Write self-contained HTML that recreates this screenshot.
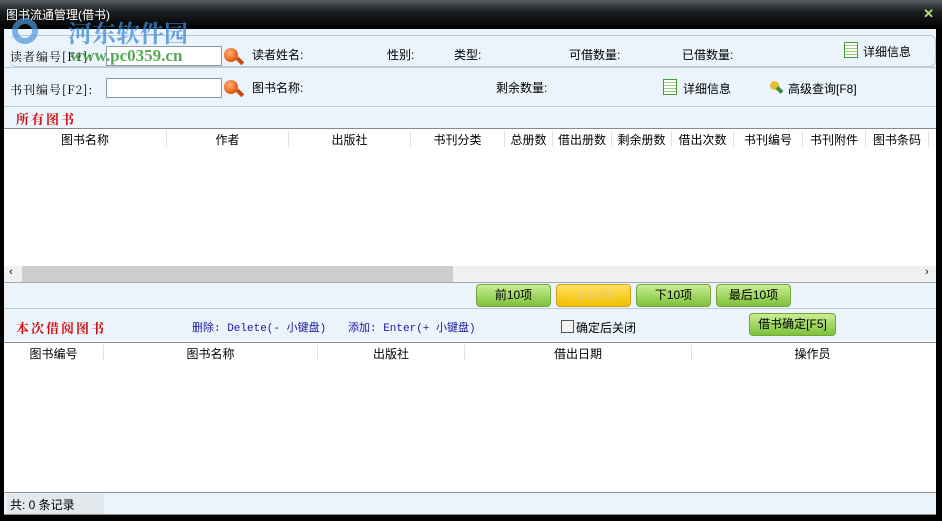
<!DOCTYPE html>
<html><head><meta charset="utf-8"><style>
*{margin:0;padding:0;box-sizing:border-box}
body{width:942px;height:521px;background:#000;position:relative;overflow:hidden;font-family:"Liberation Sans","Noto Sans CJK SC",sans-serif;font-size:12px;color:#000}
.a{position:absolute}
.title{left:0;top:0;width:942px;height:29px;background:linear-gradient(#5a5f62,#1c1f21 40%,#000);color:#fff;font-size:12px;padding:6px 0 0 6px}
.main{left:4px;top:29px;width:932px;height:486px;background:#eaf4fa}
.inp{background:#fff;border:1px solid #8a9aa6;height:20px}
.mag{width:14px;height:14px;border-radius:50%;background:radial-gradient(circle at 40% 35%,#ffb27a,#e8560e 70%)}
.mag:after{content:"";position:absolute;left:12px;top:11px;width:8px;height:4px;background:#c94d10;transform:rotate(45deg)}
.red{color:#d01010;font-family:"Noto Serif CJK SC",serif;letter-spacing:2px;font-size:13px;font-weight:bold}
.hd{background:#fff;border-top:1px solid #8a8a8a;height:20px}
.hd span{position:absolute;top:2px;text-align:center;border-right:1px solid #e2e2e2;height:16px}
.btn{height:23px;border:1px solid #7aa040;border-radius:4px;background:linear-gradient(#c8ee90,#7cc23a);text-align:center;line-height:21px;font-size:12px}
.doc{width:14px;height:16px;border:1px solid #4a9a3a;background:repeating-linear-gradient(#fff 0 2px,#9ad07a 2px 3px);}
.blue{color:#1a1aa0;font-family:"Liberation Mono","Noto Sans CJK SC",monospace;font-size:11px}
</style></head><body>
<div class="a title">图书流通管理(借书)</div>
<div class="a" style="right:8px;top:6px;color:#b8e070;font-weight:bold;font-size:13px">✕</div>
<div class="a main"></div>
<div class="a" style="left:10px;top:35px;width:926px;height:32px;border:1px solid #b8c8d4;border-radius:6px;border-left:none"></div>
<div class="a" style="left:12px;top:18px;width:26px;height:26px;border-radius:50%;border:6px solid #4a96dc;opacity:.7"></div>
<div class="a" style="left:68px;top:14px;color:#3a8ad8;font-size:24px;font-weight:bold;opacity:.75;font-family:'Noto Serif CJK SC',serif">河东软件园</div>
<div class="a" style="left:10px;top:48px;font-family:'Noto Serif CJK SC',serif;letter-spacing:1px">读者编号[F1]:</div>
<div class="a inp" style="left:106px;top:46px;width:116px"></div>
<div class="a" style="left:70px;top:46px;color:#3a9a3a;font-size:17px;font-weight:bold;font-family:'Liberation Serif',serif;opacity:.85">www.pc0359.cn</div>
<div class="a mag" style="left:224px;top:48px"></div>
<div class="a" style="left:252px;top:46px">读者姓名:</div>
<div class="a" style="left:387px;top:46px">性别:</div>
<div class="a" style="left:454px;top:46px">类型:</div>
<div class="a" style="left:569px;top:46px">可借数量:</div>
<div class="a" style="left:682px;top:46px">已借数量:</div>
<div class="a doc" style="left:844px;top:42px"></div>
<div class="a" style="left:863px;top:43px">详细信息</div>
<div class="a" style="left:4px;top:67px;width:932px;border-top:1px solid #c0ccd4"></div>
<div class="a" style="left:10px;top:81px;font-family:'Noto Serif CJK SC',serif;letter-spacing:1px">书刊编号[F2]:</div>
<div class="a inp" style="left:106px;top:78px;width:116px"></div>
<div class="a mag" style="left:224px;top:80px"></div>
<div class="a" style="left:252px;top:79px">图书名称:</div>
<div class="a" style="left:496px;top:79px">剩余数量:</div>
<div class="a doc" style="left:663px;top:79px"></div>
<div class="a" style="left:683px;top:80px">详细信息</div>
<div class="a" style="left:770px;top:81px;width:9px;height:9px;border-radius:50%;background:#e0c030"></div>
<div class="a" style="left:776px;top:88px;width:7px;height:4px;background:#3a8a3a;transform:rotate(45deg)"></div>
<div class="a" style="left:788px;top:80px">高级查询[F8]</div>
<div class="a" style="left:4px;top:106px;width:932px;border-top:1px solid #c0ccd4"></div>
<div class="a red" style="left:16px;top:109px">所有图书</div>
<div class="a" style="left:4px;top:128px;width:932px;height:138px;background:#fff"></div>
<div class="a hd" style="left:4px;top:128px;width:932px">
<span style="left:0;width:163px">图书名称</span><span style="left:163px;width:122px">作者</span><span style="left:285px;width:122px">出版社</span><span style="left:407px;width:94px">书刊分类</span><span style="left:501px;width:48px">总册数</span><span style="left:549px;width:59px">借出册数</span><span style="left:608px;width:60px">剩余册数</span><span style="left:668px;width:62px">借出次数</span><span style="left:730px;width:69px">书刊编号</span><span style="left:799px;width:63px">书刊附件</span><span style="left:862px;width:63px">图书条码</span></div>
<div class="a" style="left:4px;top:266px;width:932px;height:16px;background:#f0f0f0"></div>
<div class="a" style="left:22px;top:266px;width:431px;height:16px;background:#cdcdcd"></div>
<div class="a" style="left:9px;top:266px;font-size:11px">‹</div><div class="a" style="left:925px;top:266px;font-size:11px">›</div>
<div class="a" style="left:4px;top:282px;width:932px;border-top:1px solid #a0a8b0"></div>
<div class="a btn" style="left:476px;top:284px;width:75px">前10项</div>
<div class="a btn" style="left:556px;top:284px;width:75px;background:linear-gradient(#ffe060,#f0c000);border-color:#d0a020;color:#e8d070">上10项</div>
<div class="a btn" style="left:636px;top:284px;width:75px">下10项</div>
<div class="a btn" style="left:716px;top:284px;width:75px">最后10项</div>
<div class="a" style="left:4px;top:308px;width:932px;border-top:1px solid #c0ccd4"></div>
<div class="a red" style="left:16px;top:318px">本次借阅图书</div>
<div class="a blue" style="left:192px;top:319px">删除: Delete(- 小键盘)</div>
<div class="a blue" style="left:348px;top:319px">添加: Enter(+ 小键盘)</div>
<div class="a" style="left:561px;top:320px;width:13px;height:13px;border:1px solid #555;background:#f4f4f4"></div>
<div class="a" style="left:576px;top:319px">确定后关闭</div>
<div class="a btn" style="left:749px;top:313px;width:87px">借书确定[F5]</div>
<div class="a" style="left:4px;top:341px;width:932px;height:151px;background:#fff"></div>
<div class="a hd" style="left:4px;top:342px;width:932px">
<span style="left:0;width:100px">图书编号</span><span style="left:100px;width:214px">图书名称</span><span style="left:314px;width:147px">出版社</span><span style="left:461px;width:227px">借出日期</span><span style="left:688px;width:241px;border:none">操作员</span></div>
<div class="a" style="left:4px;top:492px;width:932px;border-top:1px solid #909090"></div>
<div class="a" style="left:7px;top:494px;width:97px;height:20px;background:#e2e8ec;padding:2px 0 0 3px">共: 0 条记录</div>
<div class="a" style="left:4px;top:514px;width:932px;border-top:1px solid #909090"></div>
</body></html>
